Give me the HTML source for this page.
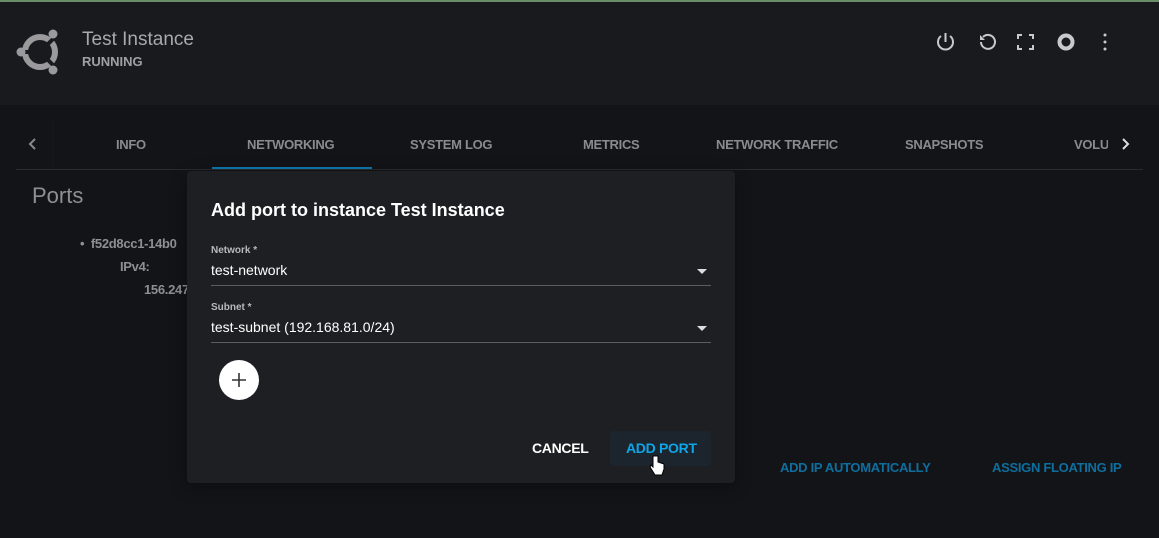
<!DOCTYPE html>
<html><head><style>
body{margin:0;width:1159px;height:538px;background:#131417;font-family:"Liberation Sans",sans-serif;position:relative;overflow:hidden}
.a{position:absolute}
.top{left:0;top:0;width:1159px;height:2px;background:#6b8c6b}
.hdr{left:0;top:2px;width:1159px;height:103px;background:#181a1e}
.tab{top:137px;font-size:13px;font-weight:bold;color:#8a8b8e;letter-spacing:-0.3px}
.lbl{font-size:10px;font-weight:bold;color:#b8b9bb}
.val{font-size:14px;color:#fff}
.line{height:1px;background:#5c5d60;width:500px;left:211px}
.caret{width:0;height:0;border-left:5px solid transparent;border-right:5px solid transparent;border-top:5px solid #ddd}
.btn{font-size:14px;font-weight:bold;letter-spacing:-0.3px}
.pl{font-size:13px;color:#8e8f91;font-weight:bold;letter-spacing:-0.3px}
</style></head><body>
<div class="a top"></div>
<div class="a hdr"></div>
<svg class="a" style="left:16px;top:28px" width="46" height="48" viewBox="0 0 46 48">
<circle cx="24" cy="24" r="15" fill="none" stroke="#9a9a9c" stroke-width="6"/>
<line x1="37" y1="11" x2="29" y2="19" stroke="#181a1e" stroke-width="4"/>
<line x1="37" y1="37" x2="29" y2="29" stroke="#181a1e" stroke-width="4"/>
<line x1="4" y1="24" x2="14" y2="24" stroke="#181a1e" stroke-width="4"/>
<circle cx="37" cy="6" r="4.5" fill="#9a9a9c"/><circle cx="37" cy="42" r="4.5" fill="#9a9a9c"/><circle cx="5" cy="24" r="4.5" fill="#9a9a9c"/>
</svg>
<div class="a" style="left:82px;top:29px;font-size:19px;color:#a8a9ab">Test Instance</div>
<div class="a" style="left:82px;top:54px;font-size:13px;font-weight:bold;color:#a0a1a3">RUNNING</div>
<svg class="a" style="left:934px;top:30px" width="180" height="24" viewBox="0 0 180 24" fill="none" stroke="#c8c9cb" stroke-width="2">
<path d="M7 6 A7.5 7.5 0 1 0 16 6"/><line x1="11.5" y1="3" x2="11.5" y2="12"/>
<path d="M47 12 A7 7 0 1 0 49 7"/><path d="M46 5 L46 10 L51 10" fill="#c8c9cb" stroke="none"/>
<path d="M84 9V5h4M95 5h4v4M99 15v4h-4M88 19h-4v-4"/>
<circle cx="132" cy="12" r="6.5" stroke-width="4"/>
<circle cx="171" cy="5" r="1.5" fill="#c8c9cb" stroke="none"/><circle cx="171" cy="12" r="1.5" fill="#c8c9cb" stroke="none"/><circle cx="171" cy="19" r="1.5" fill="#c8c9cb" stroke="none"/>
</svg>
<svg class="a" style="left:27px;top:137px" width="12" height="14"><path d="M8 2L3 7l5 5" stroke="#888" stroke-width="2" fill="none"/></svg>
<div class="a" style="left:52px;top:120px;width:1px;height:48px;background:#17181b"></div>
<div class="a tab" style="left:116px">INFO</div>
<div class="a tab" style="left:247px">NETWORKING</div>
<div class="a tab" style="left:410px">SYSTEM LOG</div>
<div class="a tab" style="left:583px">METRICS</div>
<div class="a tab" style="left:716px">NETWORK TRAFFIC</div>
<div class="a tab" style="left:905px">SNAPSHOTS</div>
<div class="a tab" style="left:1074px;width:34px;overflow:hidden;white-space:nowrap">VOLUMES</div>
<svg class="a" style="left:1120px;top:137px" width="12" height="14"><path d="M3 2l5 5-5 5" stroke="#ddd" stroke-width="2" fill="none"/></svg>
<div class="a" style="left:16px;top:169px;width:1127px;height:1px;background:#2a2b2e"></div>
<div class="a" style="left:212px;top:167px;width:160px;height:2px;background:#0e7ab0"></div>
<div class="a" style="left:32px;top:183px;font-size:22px;color:#8e8f91">Ports</div>
<div class="a pl" style="left:80px;top:236px">•&nbsp;&nbsp;f52d8cc1-14b0</div>
<div class="a pl" style="left:120px;top:259px">IPv4:</div>
<div class="a pl" style="left:144px;top:282px">156.247</div>
<div class="a btn" style="left:780px;top:460px;font-size:13px;color:#0e6e9e">ADD IP AUTOMATICALLY</div>
<div class="a btn" style="left:992px;top:460px;font-size:13px;color:#0e6e9e">ASSIGN FLOATING IP</div>
<div class="a" style="left:187px;top:171px;width:548px;height:312px;background:#1e1f23;border-radius:4px;box-shadow:0 4px 16px rgba(0,0,0,.35)"></div>
<div class="a" style="left:211px;top:200px;font-size:18px;font-weight:bold;color:#fff">Add port to instance Test Instance</div>
<div class="a lbl" style="left:211px;top:245px">Network *</div>
<div class="a val" style="left:211px;top:262px">test-network</div>
<div class="a caret" style="left:697px;top:269px"></div>
<div class="a line" style="top:285px"></div>
<div class="a lbl" style="left:211px;top:302px">Subnet *</div>
<div class="a val" style="left:211px;top:319px">test-subnet (192.168.81.0/24)</div>
<div class="a caret" style="left:697px;top:326px"></div>
<div class="a line" style="top:342px"></div>
<div class="a" style="left:219px;top:360px;width:40px;height:40px;border-radius:50%;background:#fff"></div>
<svg class="a" style="left:229px;top:370px" width="20" height="20"><path d="M10 3v14M3 10h14" stroke="#333" stroke-width="1.6"/></svg>
<div class="a btn" style="left:532px;top:440px;color:#fff">CANCEL</div>
<div class="a" style="left:610px;top:431px;width:101px;height:35px;background:#1c252d;border-radius:4px"></div>
<div class="a btn" style="left:626px;top:440px;color:#0ea5e9">ADD PORT</div>
<svg class="a" style="left:649px;top:455px" width="16" height="22"><path d="M4 1v11l-2-2-1 2 5 8h7l2-6v-5l-3-1-3-1V1z" fill="#fff" stroke="#000" stroke-width="1"/></svg>
</body></html>
